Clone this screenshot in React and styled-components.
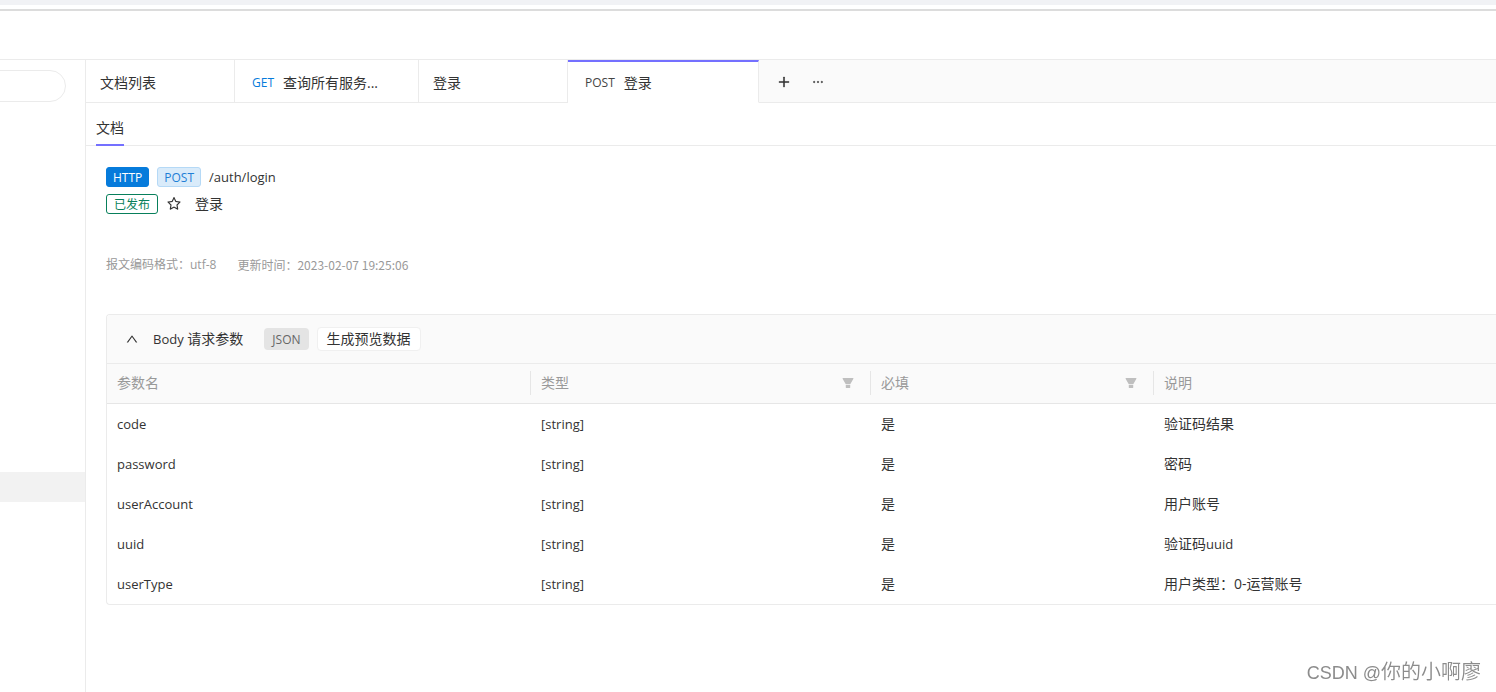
import { useState } from "react";
import styled, { createGlobalStyle } from "styled-components";
import {
  AiFillFilter,
  AiOutlineEllipsis,
  AiOutlinePlus,
  AiOutlineStar,
  AiOutlineUp,
} from "react-icons/ai";

const tabs = [
  { id: 1, title: "文档列表", width: 149 },
  { id: 2, method: "GET", title: "查询所有服务...", width: 184 },
  { id: 3, title: "登录", width: 149 },
  { id: 4, method: "POST", title: "登录", width: 191 },
];

const params = [
  { name: "code", type: "[string]", required: "是", desc: "验证码结果" },
  { name: "password", type: "[string]", required: "是", desc: "密码" },
  { name: "userAccount", type: "[string]", required: "是", desc: "用户账号" },
  { name: "uuid", type: "[string]", required: "是", desc: "验证码", suffix: "uuid" },
  { name: "userType", type: "[string]", required: "是", desc: "用户类型：0-运营账号" },
];

const App = () => {
  const [active, setActive] = useState(4);
  const [open, setOpen] = useState(true);

  return (
    <Page>
      <GlobalStyle />
      <BrowserEdge />
      <Header />
      <Layout>
        <Sidebar>
          <SearchInput type="text" aria-label="搜索" />
          <SelectedNode />
        </Sidebar>

        <Main>
          <TabBar>
            {tabs.map((tab) => (
              <Tab
                key={tab.id}
                type="button"
                $width={tab.width}
                $method={!!tab.method}
                $active={tab.id === active}
                onClick={() => setActive(tab.id)}
              >
                {tab.method && <Method $get={tab.method === "GET"}>{tab.method}</Method>}
                <span>{tab.title}</span>
              </Tab>
            ))}
            <TabTools>
              <IconButton type="button" aria-label="新建"><AiOutlinePlus size={14} /></IconButton>
              <IconButton type="button" aria-label="更多"><AiOutlineEllipsis size={14} /></IconButton>
            </TabTools>
          </TabBar>

          <SubTabs>
            <SubTab type="button">文档</SubTab>
          </SubTabs>

          <Content>
            <TagRow>
              <Tag $kind="http">HTTP</Tag>
              <Tag $kind="post">POST</Tag>
              <Latin>/auth/login</Latin>
            </TagRow>
            <TagRow>
              <Tag $kind="published">已发布</Tag>
              <StarButton type="button" aria-label="收藏"><AiOutlineStar size={16} /></StarButton>
              <span>登录</span>
            </TagRow>

            <Meta>
              <span>报文编码格式：utf-8</span>
              <span>更新时间：<Time>2023-02-07 19:25:06</Time></span>
            </Meta>

            <Panel>
              <PanelHeader>
                <IconButton type="button" aria-label="收起" onClick={() => setOpen(!open)}>
                  <AiOutlineUp size={14} />
                </IconButton>
                <PanelTitle><Latin>Body</Latin> 请求参数</PanelTitle>
                <JsonTag>JSON</JsonTag>
                <PreviewButton type="button">生成预览数据</PreviewButton>
              </PanelHeader>
              {open && (
                <Table>
                  <colgroup>
                    <Col $width={424} />
                    <Col $width={340} />
                    <Col $width={283} />
                    <col />
                  </colgroup>
                  <thead>
                    <tr>
                      <Th><ThInner $line>参数名</ThInner></Th>
                      <Th><ThInner $line>类型<AiFillFilter size={14} /></ThInner></Th>
                      <Th><ThInner $line>必填<AiFillFilter size={14} /></ThInner></Th>
                      <Th><ThInner>说明</ThInner></Th>
                    </tr>
                  </thead>
                  <tbody>
                    {params.map((p) => (
                      <tr key={p.name}>
                        <Td><Latin>{p.name}</Latin></Td>
                        <Td><Latin>{p.type}</Latin></Td>
                        <Td>{p.required}</Td>
                        <Td>{p.desc}{p.suffix && <Latin>{p.suffix}</Latin>}</Td>
                      </tr>
                    ))}
                  </tbody>
                </Table>
              )}
            </Panel>
          </Content>
        </Main>
      </Layout>
      <Watermark><WatermarkSite>CSDN @</WatermarkSite>你的小啊廖</Watermark>
    </Page>
  );
};

export default App;


const GlobalStyle = createGlobalStyle`
  * {
    box-sizing: border-box;
  }

  body {
    margin: 0;
    background-color: #fff;
    color: #333;
    font-family: "Open Sans", "Noto Sans CJK SC", sans-serif;
    font-size: 14px;
    line-height: 20px;
  }

  button {
    padding: 0;
    border: none;
    background: none;
    color: inherit;
    font: inherit;
    cursor: pointer;
  }
`

const Page = styled.div`
  min-height: 100vh;
  display: flex;
  flex-direction: column;
`

const BrowserEdge = styled.div`
  height: 11px;
  background-color: #fff;
  border-top: 5px solid #f1f2f5;
  border-bottom: 2px solid #dcdcdc;
`

const Header = styled.header`
  height: 49px;
  border-bottom: 1px solid #ebebeb;
`

const Layout = styled.div`
  flex: 1;
  display: flex;
`

const Sidebar = styled.aside`
  width: 86px;
  flex-shrink: 0;
  overflow: hidden;
  padding-top: 10px;
  border-right: 1px solid #ebebeb;
`

const SearchInput = styled.input`
  display: block;
  width: 96px;
  height: 32px;
  margin-left: -30px;
  border: 1px solid #ebebeb;
  border-radius: 16px;
  outline: none;
`

const SelectedNode = styled.div`
  height: 30px;
  margin-top: 370px;
  background-color: #f2f2f2;
`

const Main = styled.main`
  flex: 1;
  min-width: 0;
`

const TabBar = styled.div`
  display: flex;
  height: 43px;
  background-color: #fafafa;
`

const Tab = styled.button`
  && {
    display: flex;
    align-items: center;
    gap: 9px;
    width: ${({ $width }) => $width}px;
    padding-left: ${({ $method }) => ($method ? 17 : 14)}px;
    padding-top: ${({ $active }) => ($active ? 2 : 4)}px;
    background-color: #fff;
    border-right: 1px solid #ebebeb;
    border-top: ${({ $active }) => ($active ? "2px solid #7470ff" : "none")};
    border-bottom: 1px solid ${({ $active }) => ($active ? "#fff" : "#ebebeb")};
    white-space: nowrap;
  }
`

const Method = styled.span`
  font-size: 12px;
  color: ${({ $get }) => ($get ? "#067bdb" : "#444")};
`

const TabTools = styled.div`
  flex: 1;
  display: flex;
  align-items: center;
  gap: 20px;
  padding-left: 18px;
  padding-top: 2px;
  border-bottom: 1px solid #ebebeb;

  svg {
    stroke: currentColor;
    stroke-width: 40px;
  }
`

const IconButton = styled.button`
  display: flex;
`

const SubTabs = styled.div`
  display: flex;
  height: 43px;
  padding-left: 10px;
  border-bottom: 1px solid #ebebeb;
`

const SubTab = styled.button`
  && {
    height: 43px;
    padding-top: 8px;
    border-bottom: 2px solid #7470ff;
  }
`

const Content = styled.section`
  padding: 21px 0 0 20px;
`

const TagRow = styled.div`
  display: flex;
  align-items: center;
  gap: 8px;
  height: 20px;
  margin-bottom: 7px;
`

const tagStyles = {
  http: "padding: 0 6px; background-color: #067bdb; border-color: #067bdb; color: #fff;",
  post: "padding: 0 6px; background-color: #d9ebfa; border-color: #b5d9f6; color: #1f7fd6;",
  published: "padding: 0 7px; background-color: #fff; border-color: #087f5b; color: #087f5b;",
}

const Tag = styled.span`
  height: 20px;
  border: 1px solid;
  border-radius: 3px;
  font-size: 12px;
  line-height: 20px;
  ${({ $kind }) => tagStyles[$kind]}
`

const Latin = styled.span`
  font-size: 13px;
`

const StarButton = styled.button`
  display: flex;
  margin-right: 5px;
`

const Meta = styled.div`
  display: flex;
  gap: 21px;
  margin: 41px 0 39px;
  height: 20px;
  color: #999;
  font-size: 12px;
`

const Time = styled.time`
  font-family: "Noto Sans CJK SC", sans-serif;
`

const Panel = styled.div`
  border: 1px solid #ebebeb;
  border-right: none;
  border-radius: 4px 0 0 4px;
  overflow: hidden;
`

const PanelHeader = styled.div`
  display: flex;
  align-items: center;
  height: 49px;
  padding-left: 18px;
  background-color: #fafafa;
  border-bottom: 1px solid #ebebeb;
`

const PanelTitle = styled.span`
  margin: 0 21px 0 14px;
`

const JsonTag = styled.span`
  height: 22px;
  padding: 0 8px;
  margin-right: 8px;
  border-radius: 4px;
  background-color: #e4e4e4;
  color: #666;
  font-size: 12px;
  line-height: 24px;
`

const PreviewButton = styled.button`
  && {
    height: 24px;
    padding: 0 9px;
    border: 1px solid #f0f0f0;
    border-radius: 4px;
    background-color: #fff;
  }
`

const Table = styled.table`
  width: 100%;
  table-layout: fixed;
  border-collapse: separate;
  border-spacing: 0;
`

const Col = styled.col`
  width: ${({ $width }) => $width}px;
`

const Th = styled.th`
  height: 40px;
  padding: 7px 0 8px;
  background-color: #fafafa;
  border-bottom: 1px solid #e6e6e6;
  color: #999;
  font-weight: normal;
  text-align: left;
  vertical-align: top;
`

const ThInner = styled.div`
  display: flex;
  align-items: center;
  justify-content: space-between;
  height: 24px;
  padding: 0 15px 0 10px;
  border-right: ${({ $line }) => ($line ? "1px solid #e6e6e6" : "none")};

  svg {
    color: #bfbfbf;
  }
`

const Td = styled.td`
  height: 40px;
  padding: 0 10px;
`

const Watermark = styled.div`
  position: fixed;
  right: 15px;
  bottom: 5px;
  color: #8c8c8c;
  font-family: "Liberation Sans", "Noto Sans CJK SC", sans-serif;
  font-size: 20px;
  font-weight: 350;
  line-height: 28px;
`

const WatermarkSite = styled.span`
  font-size: 18px;
`
